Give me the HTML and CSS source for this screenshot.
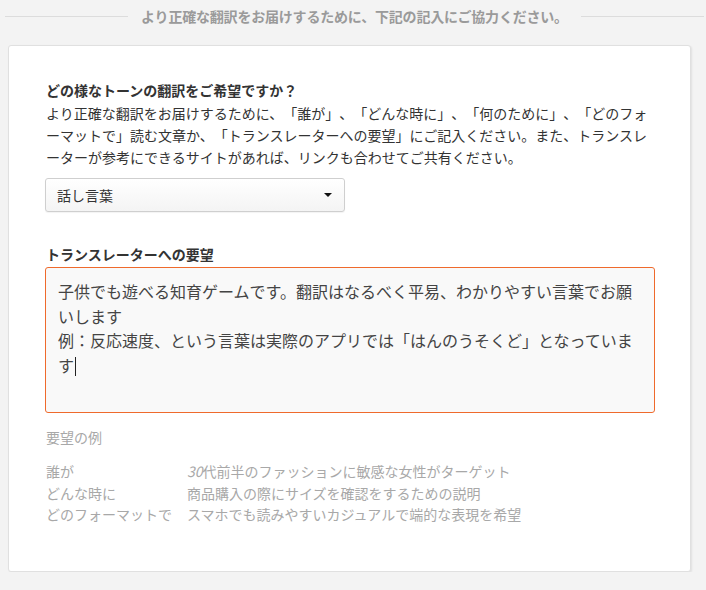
FILE: index.html
```html
<!DOCTYPE html>
<html lang="ja">
<head>
<meta charset="utf-8">
<link rel="stylesheet" href="styles.css">
</head>
<body>
<div class="page">
  <div class="divider"><span class="divider-text">より正確な翻訳をお届けするために、下記の記入にご協力ください。</span></div>
  <div class="card">
    <h3 class="q-title">どの様なトーンの翻訳をご希望ですか？</h3>
    <p class="q-desc">より正確な翻訳をお届けするために、「誰が」、「どんな時に」、「何のために」、「どのフォーマットで」読む文章か、「トランスレーターへの要望」にご記入ください。また、トランスレーターが参考にできるサイトがあれば、リンクも合わせてご共有ください。</p>
    <div class="select">
      <span class="select-value">話し言葉</span>
      <span class="select-arrow"></span>
    </div>
    <h3 class="q-title second">トランスレーターへの要望</h3>
    <div class="textarea">子供でも遊べる知育ゲームです。翻訳はなるべく平易、わかりやすい言葉でお願いします<br>例：反応速度、という言葉は実際のアプリでは「はんのうそくど」となっています<span class="caret"></span></div>
    <div class="examples-title">要望の例</div>
    <div class="examples">
      <div class="ex-key">誰が</div><div class="ex-val"><i class="num">30</i>代前半のファッションに敏感な女性がターゲット</div>
      <div class="ex-key">どんな時に</div><div class="ex-val">商品購入の際にサイズを確認をするための説明</div>
      <div class="ex-key">どのフォーマットで</div><div class="ex-val">スマホでも読みやすいカジュアルで端的な表現を希望</div>
    </div>
  </div>
</div>
</body>
</html>
```
FILE: styles.css
```css
* { box-sizing: border-box; }
html, body {
  margin: 0;
  padding: 0;
  background: #f3f3f3;
}
body {
  font-family: "Noto Sans CJK JP", "Noto Sans", sans-serif;
  color: #333;
  font-size: 14px;
  text-spacing-trim: space-all;
  font-feature-settings: normal;
}
.page {
  padding: 5px 15px 0 8px;
  width: 706px;
}
.divider {
  display: flex;
  align-items: center;
  gap: 13px;
  height: 22px;
  margin-left: -3px;
  margin-right: -13px;
}
.divider::before, .divider::after {
  content: "";
  flex: 1;
  height: 1px;
  background: #dcdcdc;
}
.divider-text {
  font-size: 14px;
  font-weight: bold;
  color: #9a9a9a;
  line-height: 22px;
  white-space: nowrap;
  letter-spacing: -0.2px;
}
.card {
  margin-top: 18px;
  width: 683px;
  height: 527px;
  background: #fff;
  border: 1px solid #e0e0e0;
  border-radius: 3px;
  box-shadow: 1px 1px 2px rgba(0,0,0,0.08);
  padding: 33px 36px 0 37px;
}
.q-title {
  margin: 0;
  font-size: 14px;
  font-weight: bold;
  line-height: 22px;
  color: #333;
}
.q-title.second {
  margin-top: 31px;
}
.q-desc {
  margin: 1px 0 0 0;
  font-size: 14px;
  line-height: 22px;
  color: #333;
}
.select {
  margin-top: 10px;
  margin-left: -1px;
  width: 300px;
  height: 34px;
  border: 1px solid #cfcfcf;
  border-radius: 3px;
  background: linear-gradient(#ffffff, #f4f4f4);
  box-shadow: 0 1px 1px rgba(0,0,0,0.05);
  display: flex;
  align-items: center;
  justify-content: space-between;
  padding: 0 12px 0 11px;
}
.select-value {
  font-size: 14px;
  color: #333;
}
.select-arrow {
  width: 0;
  height: 0;
  border-left: 4px solid transparent;
  border-right: 4px solid transparent;
  border-top: 4px solid #111;
}
.textarea {
  margin-top: 2px;
  margin-left: -1px;
  width: 610px;
  height: 146px;
  border: 1px solid #ef6a2c;
  border-radius: 3px;
  background: #f9f9f9;
  padding: 11px 12px;
  font-size: 16px;
  line-height: 24.5px;
  color: #444;
}
.caret {
  display: inline-block;
  width: 1px;
  height: 19px;
  background: #222;
  vertical-align: -4px;
  margin-left: 1px;
}
.examples-title {
  margin-top: 13px;
  font-size: 14px;
  line-height: 22px;
  color: #a8a8a8;
}
.examples {
  margin-top: 13px;
  display: grid;
  grid-template-columns: 141px 1fr;
  font-size: 14px;
  line-height: 21.5px;
  color: #a8a8a8;
}
.num {
  font-style: italic;
}
```
